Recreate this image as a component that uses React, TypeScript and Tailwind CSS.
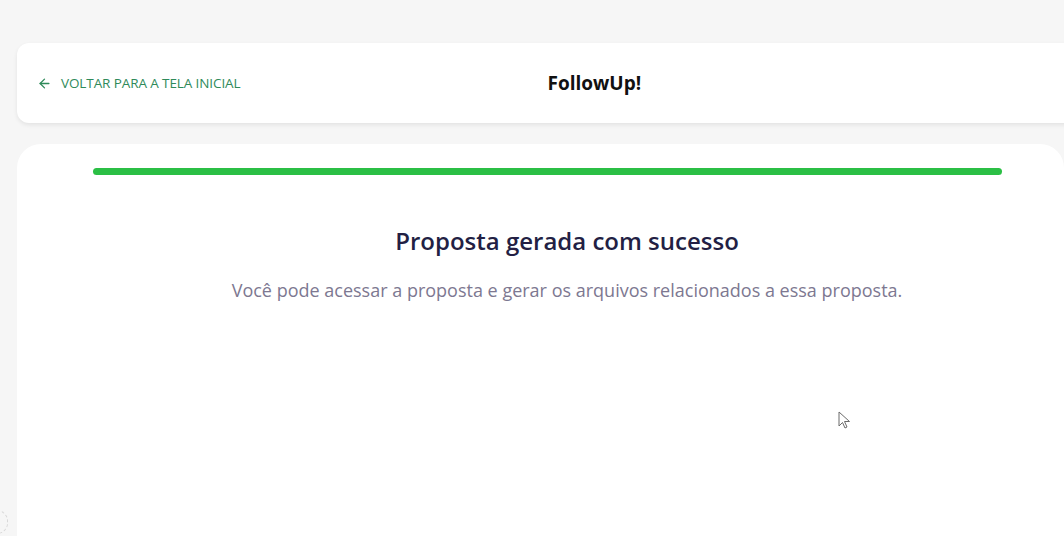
import { ArrowLeft } from "lucide-react";

function Cursor() {
  return (
    <svg
      className="absolute left-[838px] top-[411px]"
      width="14"
      height="20"
      viewBox="0 0 14 20"
      fill="none"
    >
      <path
        d="M1 1 L1 15 L4.5 11.5 L7 17 L9 16 L6.5 10.5 L11.5 10.5 Z"
        fill="#ffffff"
        stroke="#6b6b6b"
        strokeWidth="1"
        strokeLinejoin="round"
      />
    </svg>
  );
}

export default function App() {
  return (
    <div className="relative h-[536px] overflow-hidden bg-[#f6f6f6] pl-[17px] pt-[43px] font-['Open_Sans',sans-serif]">
      <header className="mr-[-24px] flex h-[80px] items-center rounded-l-[12px] bg-white pl-[20px] pt-[1px] shadow-[0_2px_4px_rgba(0,0,0,0.08)]">
        <button
          type="button"
          className="flex items-center gap-[9px] text-[13.5px] font-medium uppercase tracking-[-0.1px] text-[#2f8a5a]"
        >
          <ArrowLeft className="h-[15px] w-[15px]" strokeWidth={2.1} />
          Voltar para a tela inicial
        </button>
        <h1 className="ml-[307px] text-[19px] font-bold text-[#111111]">FollowUp!</h1>
      </header>

      <main className="mt-[21px] h-[400px] rounded-t-[24px] bg-white pt-[24px]">
        <div className="ml-[76px] h-[7px] w-[909px] rounded-full bg-[#2bbf45]" />
        <div className="flex flex-col items-center pl-[53px] pt-[50px] text-center">
          <h2 className="text-[24px] font-semibold leading-[32px] text-[#231f44]">
            Proposta gerada com sucesso
          </h2>
          <p className="mt-[20px] text-[18px] leading-[27px] text-[#7d7891]">
            Você pode acessar a proposta e gerar os arquivos relacionados a essa proposta.
          </p>
        </div>
      </main>

      <div className="absolute left-[-14px] top-[510px] h-[24px] w-[22px] rounded-full border border-dashed border-[#d8d8d8]" />
      <Cursor />
    </div>
  );
}
